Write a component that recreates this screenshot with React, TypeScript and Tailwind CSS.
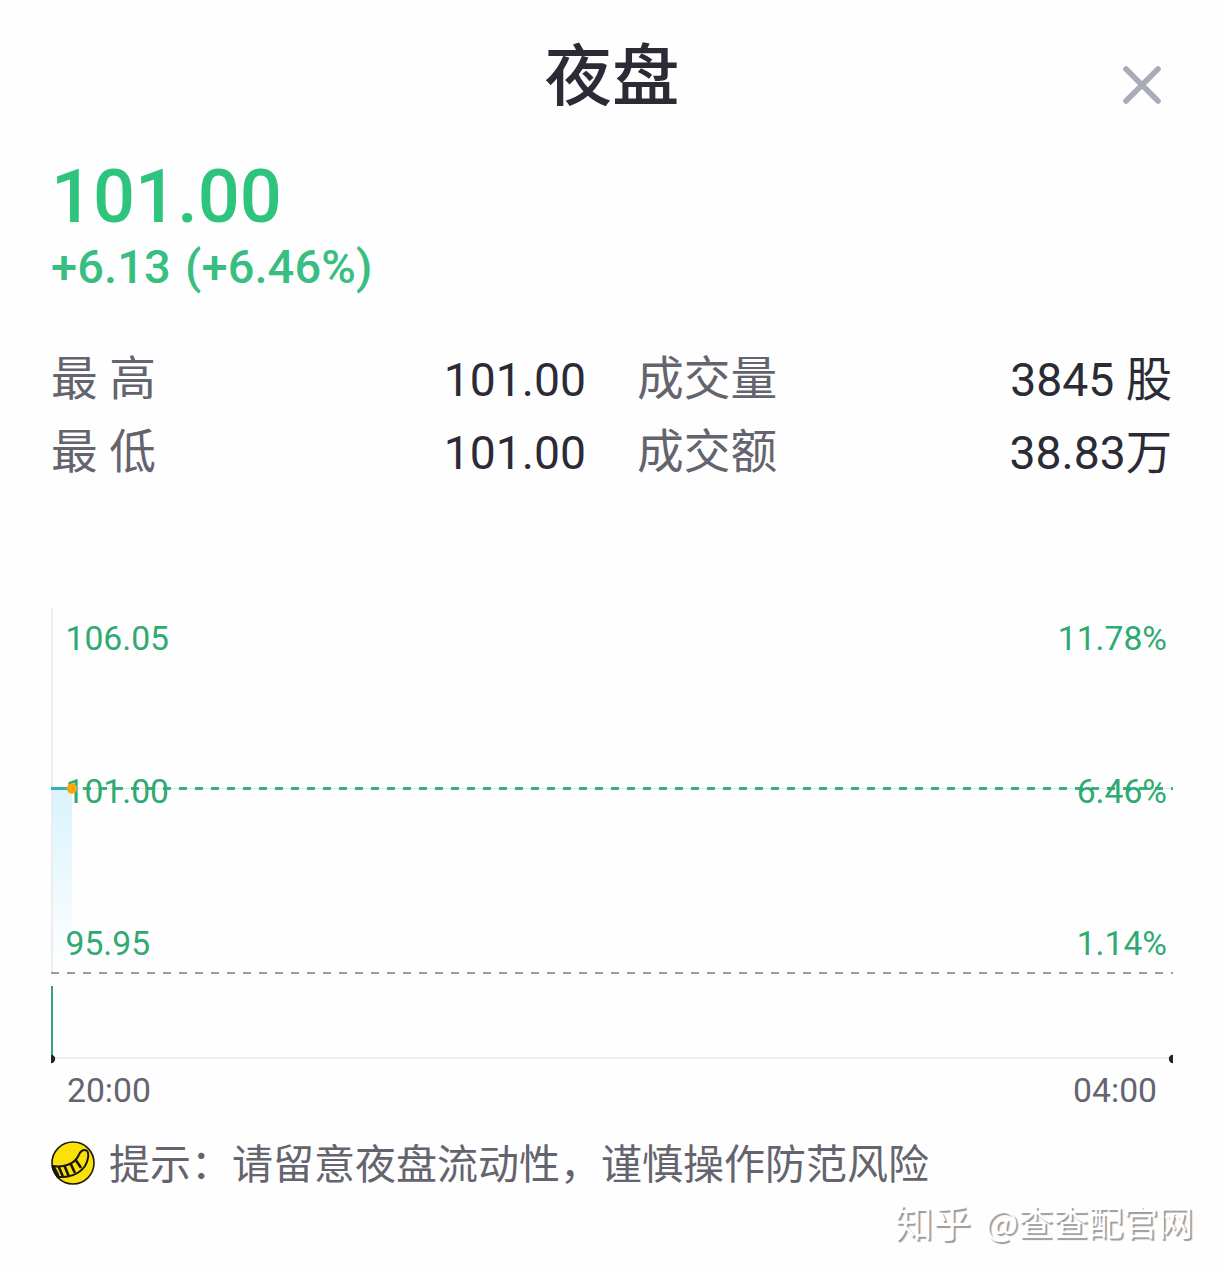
import React from 'react';

const stats = [
  { label: '最 高', value: '101.00' },
  { label: '成交量', value: '3845 股' },
  { label: '最 低', value: '101.00' },
  { label: '成交额', value: '38.83万' },
];

const levels = [
  { y: 42, price: '106.05', percent: '11.78%' },
  { y: 195, price: '101.00', percent: '6.46%' },
  { y: 347, price: '95.95', percent: '1.14%' },
];

function CloseIcon() {
  return (
    <svg className="w-10 h-10" viewBox="0 0 40 40" fill="none" stroke="#a9abb9" strokeWidth={5.6} strokeLinecap="round">
      <path d="M4 4l32 32M36 4L4 36" />
    </svg>
  );
}

function TipIcon() {
  return (
    <svg className="w-11 h-11" viewBox="0 0 44 44" fill="none">
      <circle cx="22" cy="22" r="21" fill="#fbe106" stroke="#1c1a10" strokeWidth={1.6} />
      <g stroke="#17150c" strokeWidth={2} strokeLinecap="round" strokeLinejoin="round">
        <path d="M1.5 25C13 27 24 22.500 27.500 14.500C29.500 9.500 32.500 8 35.500 9.500C38.500 11.500 37.500 19 34 25C28 33.500 17 37.500 6 35.500" />
        <path d="M8 26.500l3.500 8M14 26l3.500 8.500M20 23.500l3.500 7.500M25 19.500l4.500 6.500" strokeWidth={2.600} />
        <path d="M2.500 26.500l4 7.500" strokeWidth={3.600} />
      </g>
    </svg>
  );
}

function Chart() {
  return (
    <svg className="block w-[1122px] h-[456px]" viewBox="0 0 1122 456">
      <defs>
        <linearGradient id="area" x1="0" y1="0" x2="0" y2="1">
          <stop offset="0" stopColor="#d9f3fd" />
          <stop offset="1" stopColor="#ffffff" />
        </linearGradient>
      </defs>

      <rect x="1" y="181" width="20" height="184" fill="url(#area)" />
      <rect x="0" y="0" width="2" height="364" fill="#ededf0" />

      {/* 当前价 */}
      <path d="M0 180.500H1122" stroke="#d5eee3" strokeWidth={1} />
      <path d="M0 180.500H1122" stroke="#3bb07f" strokeWidth={3} strokeDasharray="8 8" />
      <path d="M0 180.500H20" stroke="#33b1b5" strokeWidth={3} />

      {/* 价格刻度 */}
      <g fill="#2eaa72" fontSize="33.7">
        {levels.map((level) => (
          <g key={level.price}>
            <text x="14.500" y={level.y}>{level.price}</text>
            <text x="1116" y={level.y} textAnchor="end">{level.percent}</text>
          </g>
        ))}
      </g>
      <circle cx="21" cy="180.500" r="5.200" fill="#fca60a" />

      {/* 成交量 */}
      <path d="M0 365H1122" stroke="#9a9a9c" strokeWidth={2} strokeDasharray="8 8" />
      <path d="M0 450H1122" stroke="#eeeeef" strokeWidth={2} />
      <rect x="0" y="378" width="2" height="72" fill="#2fa873" />
      <circle cx="0" cy="451" r="4.200" fill="#242428" />
      <circle cx="1122" cy="451" r="4.200" fill="#242428" />
    </svg>
  );
}

export default function App() {
  return (
    <div className="w-[1224px] h-[1272px] overflow-hidden bg-[#fefefe] px-[51px] font-[Roboto,'Noto_Sans_CJK_SC',sans-serif] text-[#2b2b36]">
      <header className="relative flex h-[150px] justify-center pt-[27px]">
        <h1 className="text-[67.5px] leading-[100px] font-medium">夜盘</h1>
        <button className="absolute right-[11px] top-[65px]" aria-label="关闭">
          <CloseIcon />
        </button>
      </header>

      <section className="h-[192px] font-medium text-[#2fc47e]">
        <div className="h-[92px] pt-px text-[74px] leading-[92px]">101.00</div>
        <div className="text-[47px] leading-[50px] text-[#38be82] tracking-[0.1px] [word-spacing:2.5px]">+6.13 (+6.46%)</div>
      </section>

      <section className="grid h-[266px] grid-cols-[535px_535px] content-start gap-x-[51px] leading-[73px]">
        {stats.map((item) => (
          <div key={item.label} className="flex h-[73px] justify-between">
            <span className="pt-px text-[46.7px] text-[#64646f]">{item.label}</span>
            <span className="pt-0.5 text-[46.3px]">{item.value}</span>
          </div>
        ))}
      </section>

      <Chart />
      <div className="flex h-[62px] justify-between px-4 pt-[7px] text-[33.7px] leading-[40px] text-[#64646f]">
        <span>20:00</span>
        <span>04:00</span>
      </div>

      <div className="flex h-[74px] items-center gap-[14px] text-[41px] text-[#64646f]">
        <TipIcon />
        <p className="whitespace-nowrap pt-1.5">提示：请留意夜盘流动性，谨慎操作防范风险</p>
      </div>

      <div className="-mr-5 -mt-[3px] flex items-center justify-end gap-3.5 font-['Noto_Sans_CJK_SC',sans-serif] text-[35px] leading-[48px] text-white [text-shadow:2px_2px_1px_#9b9b9b]">
        <span className="text-[38px]">知乎</span>
        <span>@查查配官网</span>
      </div>
    </div>
  );
}
